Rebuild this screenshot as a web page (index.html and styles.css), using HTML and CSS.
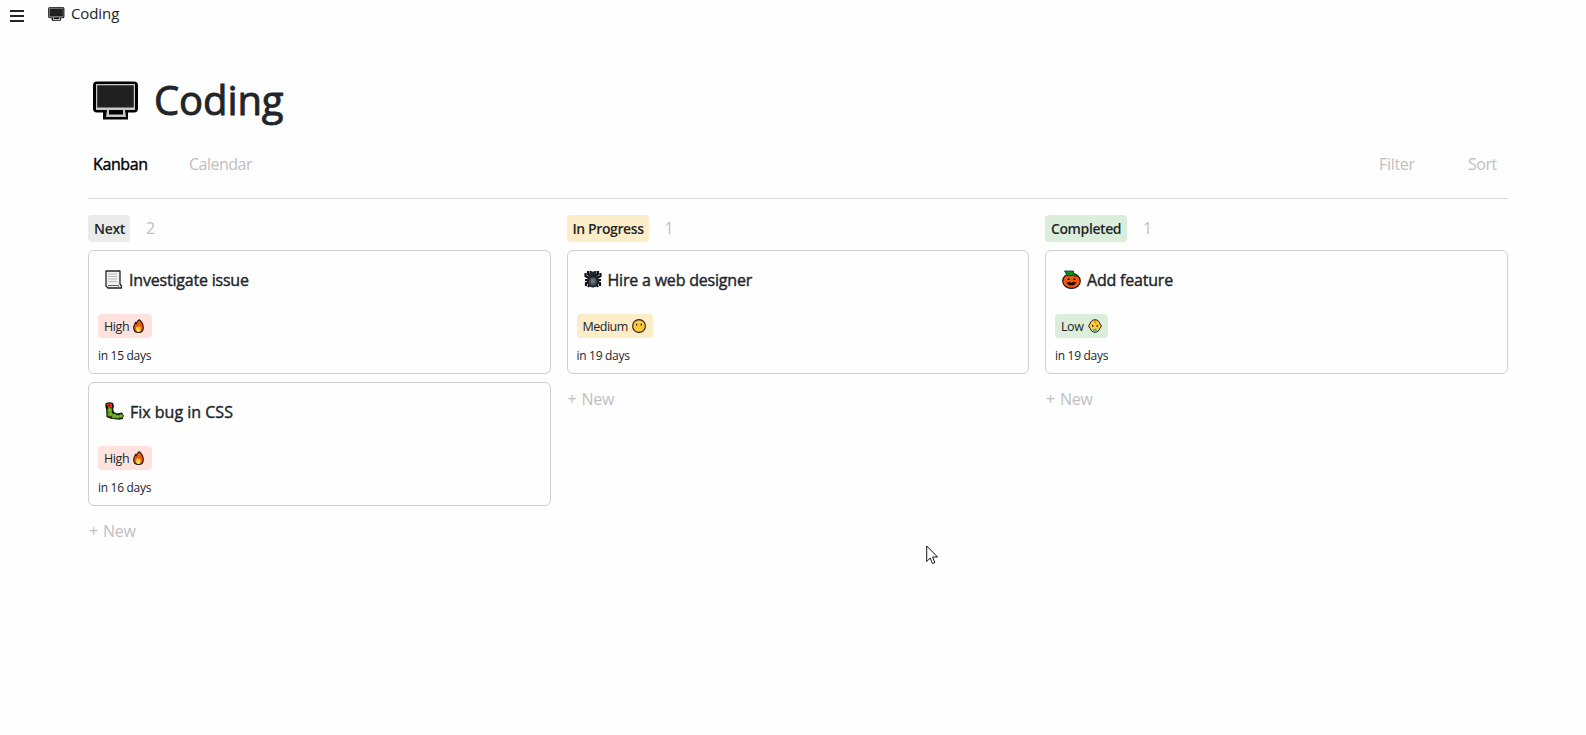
FILE: index.html
```html
<!DOCTYPE html>
<html lang="en">
<head>
<meta charset="utf-8">
<title>Coding</title>
<link rel="stylesheet" href="styles.css">
</head>
<body>
<svg class="defs" width="0" height="0">
  <symbol id="screen" viewBox="0 0 46 39">
    <path d="M4 .5h37a4 4 0 0 1 4 4v23a4 4 0 0 1-4 4h-6v7H10v-7H4a4 4 0 0 1-4-4v-23a4 4 0 0 1 4-4z" fill="#000"/>
    <path d="M3 3h39v26H3z" fill="#c8c8c8"/>
    <path d="M4.200 4.200h36.600V26.500H4.200z" fill="#202020"/>
    <path d="M14 29h2v4.500h14V29h2l1 7H13z" fill="#c8c8c8"/>
  </symbol>
  <symbol id="page" viewBox="0 0 17 19">
    <path d="M1 1h14v13l1.500 2v2H3l-2-2z" fill="#f0f0f0" stroke="#222" stroke-width="1.300" stroke-linejoin="round"/>
    <path d="M3 4h9M3 6.500h9M3 9h9M3 11.500h9" stroke="#bbb"/>
    <path d="M3 15.500h10.500v2" stroke="#666" fill="none"/>
  </symbol>
  <symbol id="bug" viewBox="0 0 19 18">
    <path d="M.5 1.500Q4-.8 8 1L9 4 8.200 7 9 10 12 11.500 17 10.500l1.800 3-1 3.500-4 .8-8-1L1.500 15 1.200 8 .3 4z" fill="#111"/>
    <path d="M1.500 2q3-1.500 5.500 0L7.200 5.500 3.500 6z" fill="#e0391b"/>
    <circle cx="4.500" cy="3.300" r=".9" fill="#211"/>
    <g fill="#5fa321"><circle cx="4.800" cy="8.300" r="2.500"/><circle cx="5" cy="12" r="2.600"/><circle cx="9" cy="14" r="2.500"/><circle cx="12.700" cy="14.700" r="2"/><circle cx="16" cy="14" r="2"/></g>
    <path d="M4 8h1.500M5 12h1.500M9 14h1.500M12.500 14.500h1M15.500 14h1" stroke="#b9df36"/>
  </symbol>
  <symbol id="spider" viewBox="0 0 18 18">
    <path d="M6 6 4 4V1M12 6l2-2V1M5 8 1.500 6V3M13 8l3.500-2V3M5 10H1M13 10h4M5 12l-3 1v3M13 12l3 1v3M6 14l-2 3M12 14l2 3M7 4 6.500 1M11 4l.5-3" fill="none" stroke="#111" stroke-width="2.200"/>
    <ellipse cx="9" cy="5" rx="4" ry="3.500" fill="#20262b"/>
    <ellipse cx="9" cy="11.500" rx="6" ry="6" fill="#191e22"/>
    <ellipse cx="9" cy="11.500" rx="4" ry="4.200" fill="#414c54"/>
    <ellipse cx="9" cy="11" rx="2.300" ry="2.600" fill="#66747e"/>
  </symbol>
  <symbol id="pumpkin" viewBox="0 0 19 19">
    <ellipse cx="9.500" cy="11" rx="8.800" ry="7.400" fill="#f4580f" stroke="#1a1410" stroke-width="1.200"/>
    <path d="M2.500 1h9v3l3 .5v2l-4-1-5 .5z" fill="#138a20" stroke="#0c3c12" stroke-width=".8"/>
    <path d="M5.200 10 6.700 7.800 8 10zM11 10l1.300-2.200L13.800 10zM4.500 11.500l2 1 1-1 2 1.500 2-1.500 1 1 2-1q-.8 4-5 4t-5-4z" fill="#160d08"/>
  </symbol>
  <symbol id="fire" viewBox="0 0 11 14">
    <path d="M6.200.7C8.500 2.500 10.300 5.500 10.300 8.700c0 3-2 4.700-4.800 4.700S.7 11.700.7 8.700c0-2.500 1-3.300 1.800-5.200l1 1C3.800 2.800 4.500 1.200 6.200.7z" fill="#f05a0e" stroke="#21150d" stroke-width="1.100"/>
    <path d="M3 10q0-2 1.200-2.800l1 1L6.500 7C8 8.500 8.500 13 5.500 13 3.800 13 3 11.500 3 10z" fill="#ffcf2d"/>
    <path d="M4.700 11.500q.8-2 1.600 0v1H4.700z" fill="#fff2b0"/>
  </symbol>
  <symbol id="face" viewBox="0 0 14 14">
    <circle cx="7" cy="7" r="6.400" fill="#ffc83d" stroke="#28211a" stroke-width="1.100"/>
    <path d="M4 4.800h1.300v1.700H4zM8.700 4.800H10v1.700H8.700z" fill="#281b10"/>
  </symbol>
  <symbol id="baby" viewBox="0 0 14 14">
    <path d="M7 .7c3 0 4.700 2.200 5 4.500 1.700.4 1.700 3.100 0 3.700-.7 2.800-2.500 4.400-5 4.400S2.700 11.700 2 8.900c-1.700-.6-1.700-3.300 0-3.700C2.300 2.900 4 .7 7 .7z" fill="#ffc83d" stroke="#2a251c"/>
    <path d="M7 1v2.500L8.500 4" fill="none" stroke="#a76812" stroke-width=".8"/>
    <path d="M4 6h1.300v1.700H4zM8.700 6H10v1.700H8.700z" fill="#281b10"/>
    <ellipse cx="7" cy="11" rx="2" ry="1.500" fill="#31b8c5"/>
  </symbol>
</svg>

<header class="topbar">
  <svg class="menu" width="14" height="12" viewBox="0 0 14 12"><path d="M0 1h14M0 6h14M0 11h14" stroke="#212529" stroke-width="2"/></svg>
  <svg class="crumb-icon" width="17" height="14"><use href="#screen"/></svg>
  <span class="crumb">Coding</span>
</header>

<main class="page">
  <div class="heading">
    <svg width="46" height="39"><use href="#screen"/></svg>
    <h1>Coding</h1>
  </div>
  <nav class="tabs">
    <span class="tab active">Kanban</span>
    <span class="tab calendar">Calendar</span>
    <span class="tab filter">Filter</span>
    <span class="tab sort">Sort</span>
  </nav>

  <div class="board">
    <section class="column">
      <div class="column-head"><span class="status next">Next</span><span class="count">2</span></div>
      <article class="card">
        <h2><svg width="17" height="19"><use href="#page"/></svg><span class="title">Investigate issue</span></h2>
        <span class="badge high">High<svg width="11" height="14"><use href="#fire"/></svg></span>
        <p>in 15 days</p>
      </article>
      <article class="card">
        <h2><svg width="19" height="18"><use href="#bug"/></svg><span class="title loose">Fix bug in CSS</span></h2>
        <span class="badge high">High<svg width="11" height="14"><use href="#fire"/></svg></span>
        <p>in 16 days</p>
      </article>
      <div class="new"><span class="plus">+</span>New</div>
    </section>
    <section class="column">
      <div class="column-head"><span class="status progress">In Progress</span><span class="count">1</span></div>
      <article class="card">
        <h2><svg width="18" height="18"><use href="#spider"/></svg><span class="title">Hire a web designer</span></h2>
        <span class="badge medium">Medium<svg width="14" height="14"><use href="#face"/></svg></span>
        <p>in 19 days</p>
      </article>
      <div class="new"><span class="plus">+</span>New</div>
    </section>
    <section class="column">
      <div class="column-head"><span class="status completed">Completed</span><span class="count">1</span></div>
      <article class="card">
        <h2><svg width="19" height="19"><use href="#pumpkin"/></svg><span class="title">Add feature</span></h2>
        <span class="badge low">Low<svg width="14" height="14"><use href="#baby"/></svg></span>
        <p>in 19 days</p>
      </article>
      <div class="new"><span class="plus">+</span>New</div>
    </section>
  </div>
</main>
<svg class="cursor" width="13" height="20" viewBox="0 0 13 20"><path d="M.7 1v15.500L4.200 13l2.300 5.500 2.400-1L6.600 12h5z" fill="#fff" stroke="#111" stroke-width="1"/></svg>
</body>
</html>
```
FILE: styles.css
```css
* { box-sizing: border-box; }
body {
  margin: 0;
  height: 735px;
  overflow: hidden;
  background: #fefefe;
  color: #212529;
  font-family: "Open Sans", "Noto Sans", sans-serif;
  font-size: 16px;
  line-height: 24px;
}
svg { display: block; flex: none; }
.defs { position: absolute; }
h1, h2, p { margin: 0; }

.topbar { display: flex; height: 64px; padding: 2px 0 0 10px; align-items: flex-start; }
.menu { margin-top: 8px; }
.crumb-icon { margin: 5px 6px 0 24px; }
.crumb { margin-top: -1px; font-size: 15px; letter-spacing: -0.1px; }

.page { width: 1420px; margin-left: 88px; }
.heading { display: flex; height: 72px; padding: 17px 0 0 5px; }
.heading h1 { margin: -5px 0 0 15px; font-size: 40px; line-height: 48px; font-weight: 500; letter-spacing: -0.1px; -webkit-text-stroke: 0.9px; }
.tabs { display: flex; height: 63px; padding: 16px 11px 0 5px; border-bottom: 1px solid #d9d9d9; color: #c0c0c0; }
.active { width: 96px; color: #000; font-weight: 500; letter-spacing: -0.4px; -webkit-text-stroke: 0.4px; }
.calendar { letter-spacing: -0.5px; }
.filter { margin-left: auto; width: 89px; letter-spacing: -0.3px; }
.sort { width: 29px; letter-spacing: -0.5px; }

.board { display: grid; grid-template-columns: repeat(3, 463px); column-gap: 15.500px; padding-top: 16px; }
.column:nth-child(2) .card { width: 462px; }
.column-head { display: flex; height: 35px; align-items: flex-start; }
.status { height: 27px; padding-left: 6px; border-radius: 4px; font-size: 14px; line-height: 28px; font-weight: 600; white-space: nowrap; }
.next { width: 42px; background: #ebebeb; letter-spacing: -0.3px; }
.progress { width: 82px; background: #fdecc8; letter-spacing: -0.4px; }
.completed { width: 82px; background: #dbeddb; letter-spacing: -0.4px; }
.count { margin: 1px 0 0 16px; color: #c0c0c0; }

.card { height: 124px; margin-bottom: 8px; padding: 17px 9px 0; border: 1px solid #cfcfcf; border-radius: 6px; }
.card h2 { display: flex; height: 46px; padding-left: 7px; align-items: flex-start; font-size: 16px; line-height: 24px; font-weight: 500; white-space: nowrap; }
.card h2 svg { margin: 2px 6px 0 0; }
.title { letter-spacing: -0.2px; -webkit-text-stroke: 0.4px; }
.loose { letter-spacing: 0; }
.column:first-child .card:nth-of-type(1) .title { margin-left: 1px; }
.badge { display: flex; width: max-content; height: 24px; padding: 1px 6px 0; align-items: center; border-radius: 4px; font-size: 12.500px; letter-spacing: -0.4px; }
.badge svg { margin-left: 4px; margin-top: -1px; }
.high { width: 54px; background: #ffe2dd; }
.medium { width: 76px; background: #fdecc8; letter-spacing: -0.5px; }
.low { width: 53px; background: #dbeddb; }
.card p { padding-top: 8px; font-size: 12px; line-height: 20px; letter-spacing: -0.3px; }
.new { display: flex; padding: 5px 0 0 1px; color: #c0c0c0; letter-spacing: -0.3px; }
.plus { width: 14px; }

/* pointer floats above the board */
.cursor { position: absolute; left: 926px; top: 545px; }
```
